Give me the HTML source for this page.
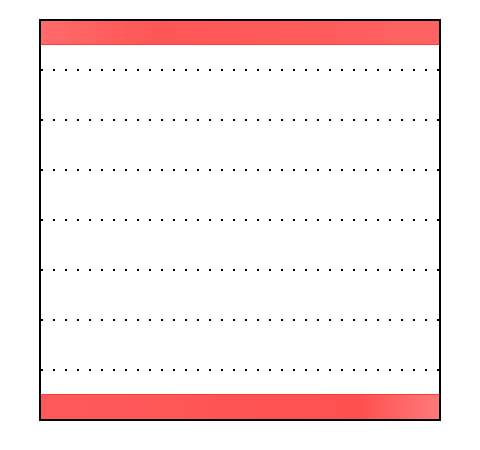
<!DOCTYPE html>
<html><head><style>html,body{margin:0;padding:0;background:#fff;width:480px;height:450px;overflow:hidden}</style></head>
<body>
<svg width="480" height="450" xmlns="http://www.w3.org/2000/svg">
<defs>
<linearGradient id="g1" x1="0" x2="1"><stop offset="0" stop-color="#ff6a6a"/><stop offset="0.3" stop-color="#ff5555"/><stop offset="1" stop-color="#ff6262"/></linearGradient>
<linearGradient id="g2" x1="0" x2="1"><stop offset="0" stop-color="#ff5a5a"/><stop offset="0.8" stop-color="#ff5050"/><stop offset="1" stop-color="#ff7a7a"/></linearGradient>
<pattern id="dots" x="41" y="0" width="12" height="450" patternUnits="userSpaceOnUse"><rect x="0" y="69" width="2" height="2" fill="#000"/></pattern>
</defs>
<rect x="40" y="20" width="400" height="25" fill="url(#g1)"/>
<line x1="40" y1="44.5" x2="440" y2="44.5" stroke="#ff3c3c" stroke-width="1"/>
<rect x="40" y="394" width="400" height="25" fill="url(#g2)"/>
<line x1="40" y1="394.5" x2="440" y2="394.5" stroke="#ff3c3c" stroke-width="1"/>
<g fill="#000">
<rect x="40" y="69" width="400" height="2" fill="url(#dots)"/>
<rect x="40" y="119" width="400" height="2" fill="url(#dots)" transform="translate(0,-0)"/>
</g>
<g>
<svg x="0" y="50" width="480" height="450"><rect x="40" y="69" width="400" height="2" fill="url(#dots)"/></svg>
</g>
<g id="rows"></g>
<g fill="#000">
<script>0</script>
</g>
<g>
<path d="" />
</g>
<g fill="#000" id="d"></g>
<g>
<rect x="40" y="69" width="400" height="2" fill="url(#dots)"/>
<rect x="40" y="69" width="400" height="2" fill="url(#dots)" transform="translate(0,50)"/>
<rect x="40" y="69" width="400" height="2" fill="url(#dots)" transform="translate(0,100)"/>
<rect x="40" y="69" width="400" height="2" fill="url(#dots)" transform="translate(0,150)"/>
<rect x="40" y="69" width="400" height="2" fill="url(#dots)" transform="translate(0,200)"/>
<rect x="40" y="69" width="400" height="2" fill="url(#dots)" transform="translate(0,250)"/>
<rect x="40" y="69" width="400" height="2" fill="url(#dots)" transform="translate(0,300)"/>
</g>
<rect x="40" y="20" width="400" height="400" fill="none" stroke="#000" stroke-width="2"/>
</svg>
</body></html>
